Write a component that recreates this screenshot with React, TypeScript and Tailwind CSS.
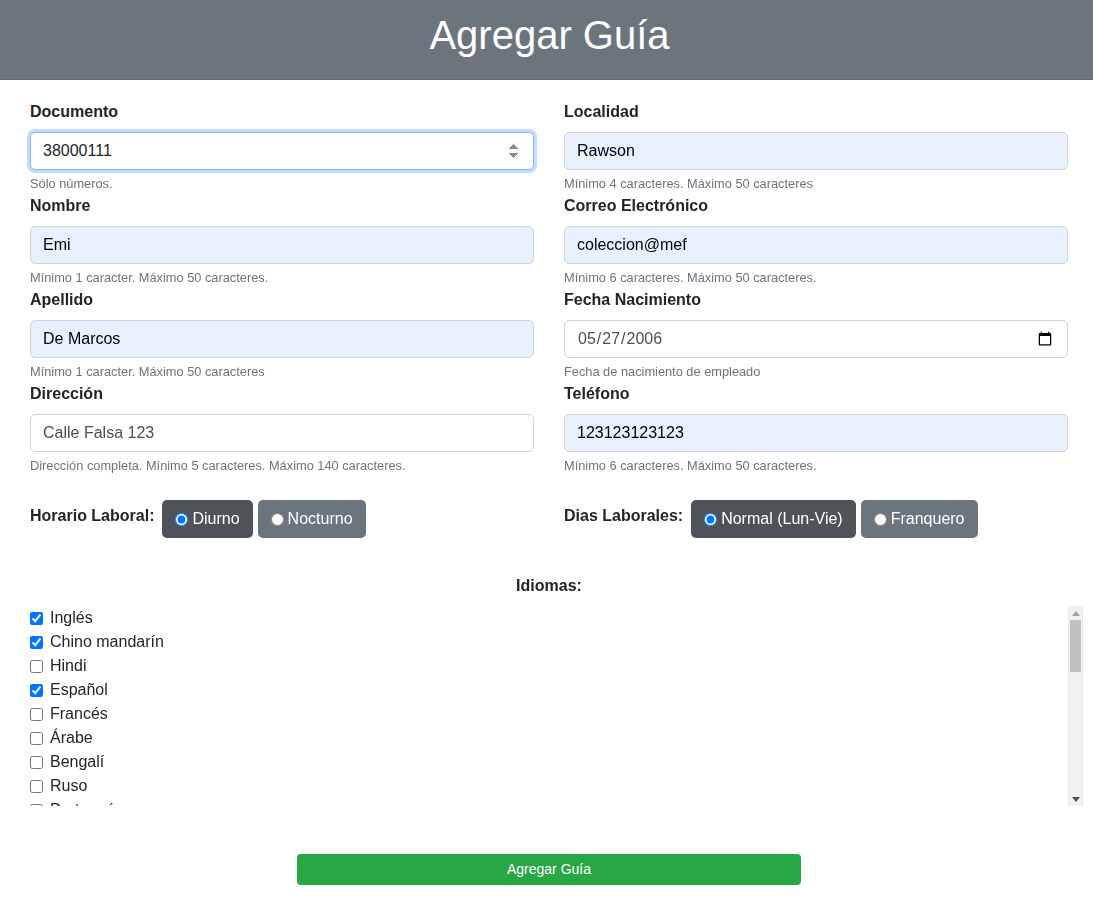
import React from "react";

type Field = {
  label: string;
  value: string;
  help: string;
  type?: string;
  autofill?: boolean;
  focus?: boolean;
};

const fields: Field[] = [
  { label: "Documento", value: "38000111", help: "Sólo números.", type: "number", focus: true },
  { label: "Localidad", value: "Rawson", help: "Mínimo 4 caracteres. Máximo 50 caracteres", autofill: true },
  { label: "Nombre", value: "Emi", help: "Mínimo 1 caracter. Máximo 50 caracteres.", autofill: true },
  { label: "Correo Electrónico", value: "coleccion@mef", help: "Mínimo 6 caracteres. Máximo 50 caracteres.", autofill: true },
  { label: "Apellido", value: "De Marcos", help: "Mínimo 1 caracter. Máximo 50 caracteres", autofill: true },
  { label: "Fecha Nacimiento", value: "2006-05-27", help: "Fecha de nacimiento de empleado", type: "date" },
  { label: "Dirección", value: "Calle Falsa 123", help: "Dirección completa. Mínimo 5 caracteres. Máximo 140 caracteres." },
  { label: "Teléfono", value: "123123123123", help: "Mínimo 6 caracteres. Máximo 50 caracteres.", autofill: true },
];

const idiomas: [string, boolean][] = [
  ["Inglés", true],
  ["Chino mandarín", true],
  ["Hindi", false],
  ["Español", true],
  ["Francés", false],
  ["Árabe", false],
  ["Bengalí", false],
  ["Ruso", false],
  ["Portugués", false],
  ["Indonesio", false],
  ["Urdu", false],
  ["Alemán", false],
  ["Japonés", false],
  ["Suajili", false],
  ["Maratí", false],
  ["Telugu", false],
  ["Turco", false],
  ["Tamil", false],
  ["Cantonés", false],
  ["Vietnamita", false],
  ["Coreano", false],
  ["Italiano", false],
  ["Persa", false],
  ["Polaco", false],
  ["Ucraniano", false],
  ["Neerlandés", false],
  ["Griego", false],
];

function FieldBlock({ f }: { f: Field }) {
  const base =
    "block w-full h-[38px] rounded-[5px] border px-3 text-base outline-none";
  let cls = base;
  if (f.focus) {
    cls += " border-[#86b7fe] bg-white text-[#212529] shadow-[0_0_0_3px_rgba(13,110,253,0.25)]";
  } else if (f.autofill) {
    cls += " border-[#ced4da] bg-[#e8f0fe] text-black";
  } else {
    cls += " border-[#ced4da] bg-white text-[#495057]";
  }
  return (
    <div>
      <label className="block text-base font-bold leading-6 mb-2 text-[#212529]">{f.label}</label>
      <input
        type={f.type ?? "text"}
        defaultValue={f.value}
        autoFocus={f.focus}
        className={cls}
      />
      <div className="mt-1 text-[12.8px] leading-[20px] text-[#6c757d]">{f.help}</div>
    </div>
  );
}

function RadioBtn({ label, checked, name }: { label: string; checked: boolean; name: string }) {
  return (
    <label
      className={
        "flex items-center h-[38px] px-[13px] rounded-[5px] text-base text-white " +
        (checked ? "bg-[#4e5359]" : "bg-[#6c757d]")
      }
    >
      <input type="radio" name={name} defaultChecked={checked} className="m-0 mr-[4px] w-[13px] h-[13px]" />
      {label}
    </label>
  );
}

function FakeScrollbar() {
  return (
    <div className="w-[15px] h-[200px] bg-[#f1f1f1] border-x border-[#e8e8e8] flex flex-col items-center shrink-0">
      <div className="h-[14px] w-full flex items-center justify-center">
        <svg width="8" height="5" viewBox="0 0 8 5">
          <path d="M0 5 L4 0 L8 5 Z" fill="#a3a3a3" />
        </svg>
      </div>
      <div className="w-[11px] h-[52px] bg-[#c1c1c1]" />
      <div className="flex-1" />
      <div className="h-[14px] w-full flex items-center justify-center">
        <svg width="8" height="5" viewBox="0 0 8 5">
          <path d="M0 0 L8 0 L4 5 Z" fill="#505050" />
        </svg>
      </div>
    </div>
  );
}

export default function App() {
  return (
    <div className="min-h-screen bg-white font-['Liberation_Sans',Arial,sans-serif] text-[#212529]">
      <header className="h-[80px] pb-[10px] bg-[#6c757d] border-b border-[#5f666d] flex items-center justify-center">
        <h1 className="ml-[6px] text-[40px] leading-[48px] font-normal text-white">Agregar Guía</h1>
      </header>
      <div className="pl-[30px] pr-[25px] pt-[20px]">
        <div className="grid grid-cols-2 gap-x-[30px]">
          {fields.map((f) => (
            <FieldBlock key={f.label} f={f} />
          ))}
        </div>
        <div className="grid grid-cols-2 gap-x-[30px] mt-[24px]">
          <div className="flex items-start gap-[8px]">
            <span className="font-bold leading-6 mt-[4px]">Horario Laboral:</span>
            <div className="flex gap-[5px]">
              <RadioBtn name="horario" label="Diurno" checked />
              <RadioBtn name="horario" label="Nocturno" checked={false} />
            </div>
          </div>
          <div className="flex items-start gap-[8px]">
            <span className="font-bold leading-6 mt-[4px]">Dias Laborales:</span>
            <div className="flex gap-[5px]">
              <RadioBtn name="dias" label="Normal (Lun-Vie)" checked />
              <RadioBtn name="dias" label="Franquero" checked={false} />
            </div>
          </div>
        </div>
        <div className="mt-[36px] text-center font-bold leading-6">Idiomas:</div>
        <div className="mt-[8px] flex -mr-[15px]">
          <div className="flex-1 h-[200px] overflow-hidden">
            {idiomas.map(([name, checked]) => (
              <label key={name} className="flex items-center h-6 leading-6 text-base">
                <input type="checkbox" defaultChecked={checked} className="m-0 w-[13px] h-[13px] mr-[7px]" />
                {name}
              </label>
            ))}
          </div>
          <FakeScrollbar />
        </div>
        <div className="mt-[48px] flex justify-center pb-[12px]">
          <button className="w-[504px] h-[31px] rounded-[4px] bg-[#28a745] text-white text-[14px]">
            Agregar Guía
          </button>
        </div>
      </div>
    </div>
  );
}
